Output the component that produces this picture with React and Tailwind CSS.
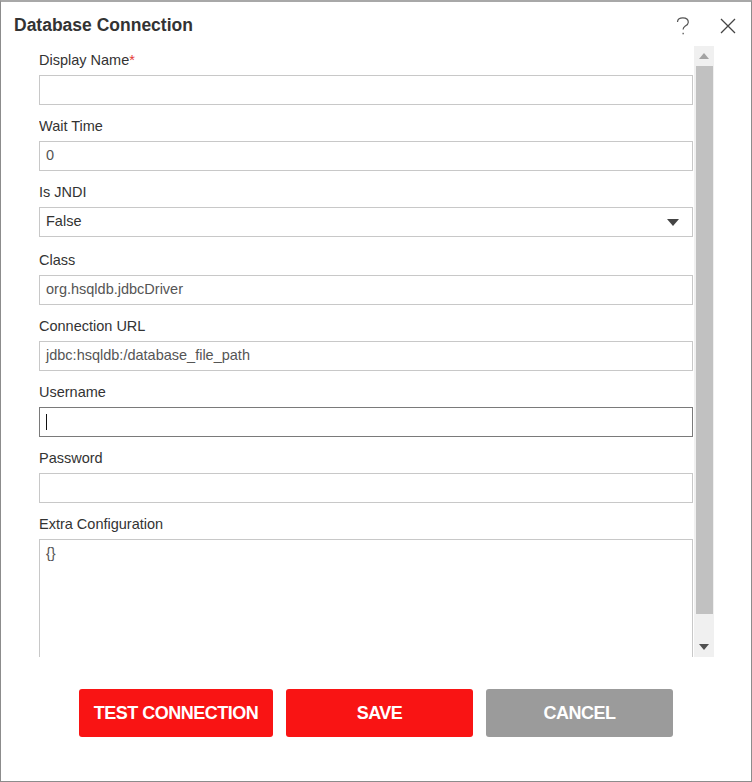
import { useState } from 'react';

const fields = [
    { key: 'displayName', label: 'Display Name', required: true, value: '' },
    { key: 'waitTime', label: 'Wait Time', value: '0' },
    { key: 'isJndi', label: 'Is JNDI', type: 'select', value: 'False' },
    { key: 'className', label: 'Class', value: 'org.hsqldb.jdbcDriver' },
    { key: 'url', label: 'Connection URL', value: 'jdbc:hsqldb:/database_file_path' },
    { key: 'username', label: 'Username', value: '', focused: true },
    { key: 'password', label: 'Password', value: '' },
];

const Field = ({ field }) => (
    <div className={field.type === 'select' ? 'mb-[13px]' : 'mb-[11px]'}>
        <div className="h-5 leading-5 mb-[5px] text-[14.5px] text-[#333]">
            {field.label}
            {field.required && <span className="text-[#e53935]">*</span>}
        </div>
        {field.type === 'select' ? (
            <div className="h-[30px] border border-[#c8c8c8] flex items-center justify-between pl-[6px] pr-[13px] text-[14.5px] text-[#333]">
                <span>{field.value}</span>
                <svg width="12" height="7" viewBox="0 0 12 7">
                    <path d="M0 0 L12 0 L6 7 Z" fill="#444" />
                </svg>
            </div>
        ) : (
            <div className={`h-[30px] border flex items-center pl-[6px] text-[14.5px] text-[#555] ${field.focused ? 'border-[#7a7a7a]' : 'border-[#c8c8c8]'}`}>
                {field.focused ? <span className="w-px h-4 bg-[#111]" /> : field.value}
            </div>
        )}
    </div>
);

// drawn scrollbar beside the form body
const ScrollBar = () => (
    <div className="w-5 shrink-0 bg-[#f0f0f0] flex flex-col items-center">
        <div className="h-5 w-full flex items-center justify-center">
            <svg width="10" height="6" viewBox="0 0 10 6">
                <path d="M5 0 L10 6 L0 6 Z" fill="#a3a3a3" />
            </svg>
        </div>
        <div className="w-[17px] h-[548px] bg-[#c1c1c1]" />
        <div className="flex-1 w-full flex items-end justify-center pb-[7px]">
            <svg width="10" height="6" viewBox="0 0 10 6">
                <path d="M0 0 L10 0 L5 6 Z" fill="#505050" />
            </svg>
        </div>
    </div>
);

export default function App() {
    const [values] = useState(fields);

    return (
        <div className="w-[752px] h-[782px] bg-white border-t-2 border-t-[#a8a8a8] border-x border-b border-[#8c8c8c] flex flex-col" style={{ fontFamily: '"Liberation Sans", Arial, sans-serif' }}>
            <div className="h-[44px] shrink-0 flex items-start justify-between pl-[13px] pr-[15px]">
                <h1 className="mt-[12px] text-[17.5px] font-bold text-[#333] leading-[22px]">Database Connection</h1>
                <div className="flex items-center gap-[30px] mt-[15px]">
                    <svg width="14" height="18" viewBox="0 0 14 18" fill="none" stroke="#555" strokeWidth="1.2">
                        <path d="M1.5 5 C1.5 2.2 3.8 0.8 6.8 0.8 C10 0.8 12.3 2.6 12.3 5.2 C12.3 7.4 10.6 8.3 9 9.3 C7.6 10.2 7.1 11 7.1 12.6" />
                        <rect x="6.5" y="15.8" width="1.3" height="1.5" fill="#555" stroke="none" />
                    </svg>
                    <svg width="16" height="16" viewBox="0 0 16 16" stroke="#444" strokeWidth="1.3">
                        <path d="M1 1 L15 15 M15 1 L1 15" />
                    </svg>
                </div>
            </div>

            <div className="h-[611px] shrink-0 flex pl-[38px] pr-[37px]">
                <div className="flex-1 overflow-hidden pt-[4px] pr-px">
                    {values.map(f => <Field key={f.key} field={f} />)}
                    <div>
                        <div className="h-5 leading-5 mb-[5px] text-[14.5px] text-[#333]">Extra Configuration</div>
                        <div className="h-[140px] border border-[#c8c8c8] pl-[6px] pt-[3px] text-[14.5px] text-[#555]">{'{}'}</div>
                    </div>
                </div>
                <ScrollBar />
            </div>

            <div className="flex-1 flex justify-center items-start pt-[32px] gap-[13px]">
                <button className="w-[194px] h-[48px] rounded-[3px] bg-[#f91414] text-white font-bold text-[18px] tracking-[-0.5px]">TEST CONNECTION</button>
                <button className="w-[187px] h-[48px] rounded-[3px] bg-[#f91414] text-white font-bold text-[18px] tracking-[-0.5px]">SAVE</button>
                <button className="w-[187px] h-[48px] rounded-[3px] bg-[#9b9b9b] text-white font-bold text-[18px] tracking-[-0.5px]">CANCEL</button>
            </div>
        </div>
    );
}
